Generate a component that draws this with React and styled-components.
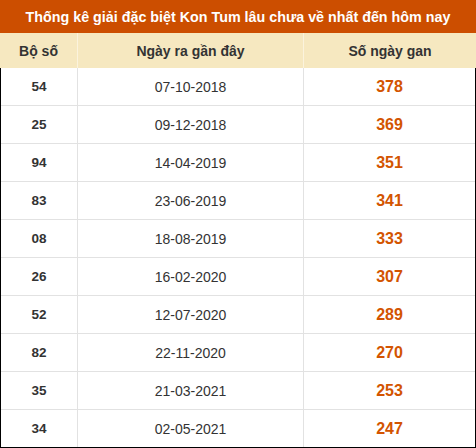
import React from 'react';
import styled, { createGlobalStyle } from 'styled-components';

const GlobalStyle = createGlobalStyle`
  html, body {
    margin: 0;
    padding: 0;
    background: #fff;
  }
  body {
    font-family: "Liberation Sans", Arial, sans-serif;
  }
`;

const rows = [
  ['54', '07-10-2018', '378'],
  ['25', '09-12-2018', '369'],
  ['94', '14-04-2019', '351'],
  ['83', '23-06-2019', '341'],
  ['08', '18-08-2019', '333'],
  ['26', '16-02-2020', '307'],
  ['52', '12-07-2020', '289'],
  ['82', '22-11-2020', '270'],
  ['35', '21-03-2021', '253'],
  ['34', '02-05-2021', '247'],
];

const Wrapper = styled.div`
  width: 476px;
  box-sizing: border-box;
`;

const Title = styled.div`
  height: 33px;
  background: #cc4e00;
  color: #fff;
  font-weight: bold;
  font-size: 14.3px;
  display: flex;
  align-items: center;
  justify-content: center;
`;

const Grid = styled.div`
  display: grid;
  grid-template-columns: 77px 226px 1fr;
`;

const HeadRow = styled(Grid)`
  height: 35px;
  background: #f6e8c0;
`;

const HeadCell = styled.div`
  display: flex;
  align-items: center;
  justify-content: center;
  font-size: 14px;
  font-weight: bold;
  color: #333;
  border-left: ${(p) => (p.first ? 'none' : '1px solid #fbf3dd')};
`;

const Body = styled.div`
  border-left: 1px solid #000;
  border-right: 1px solid #000;
  border-bottom: 1px solid #000;
`;

const Row = styled(Grid)`
  grid-template-columns: 76px 226px 1fr;
  height: 38px;
  box-sizing: border-box;
  border-bottom: 1px solid #e2e2e2;
  &:last-child {
    border-bottom: none;
    height: 37px;
  }
`;

const Cell = styled.div`
  display: flex;
  align-items: center;
  justify-content: center;
  border-left: ${(p) => (p.first ? 'none' : '1px solid #e2e2e2')};
  color: #333;
  font-size: ${(p) => (p.kind === 'gan' ? '16px' : p.kind === 'num' ? '13.5px' : '14px')};
  font-weight: ${(p) => (p.kind === 'date' ? 'normal' : 'bold')};
  ${(p) => p.kind === 'gan' && 'color: #d35400;'}
`;

export default function App() {
  return (
    <>
      <GlobalStyle />
      <Wrapper>
        <Title>Thống kê giải đặc biệt Kon Tum lâu chưa về nhất đến hôm nay</Title>
        <HeadRow>
          <HeadCell first>Bộ số</HeadCell>
          <HeadCell>Ngày ra gần đây</HeadCell>
          <HeadCell>Số ngày gan</HeadCell>
        </HeadRow>
        <Body>
          {rows.map(([num, date, gan]) => (
            <Row key={num}>
              <Cell first kind="num">{num}</Cell>
              <Cell kind="date">{date}</Cell>
              <Cell kind="gan">{gan}</Cell>
            </Row>
          ))}
        </Body>
      </Wrapper>
    </>
  );
}
